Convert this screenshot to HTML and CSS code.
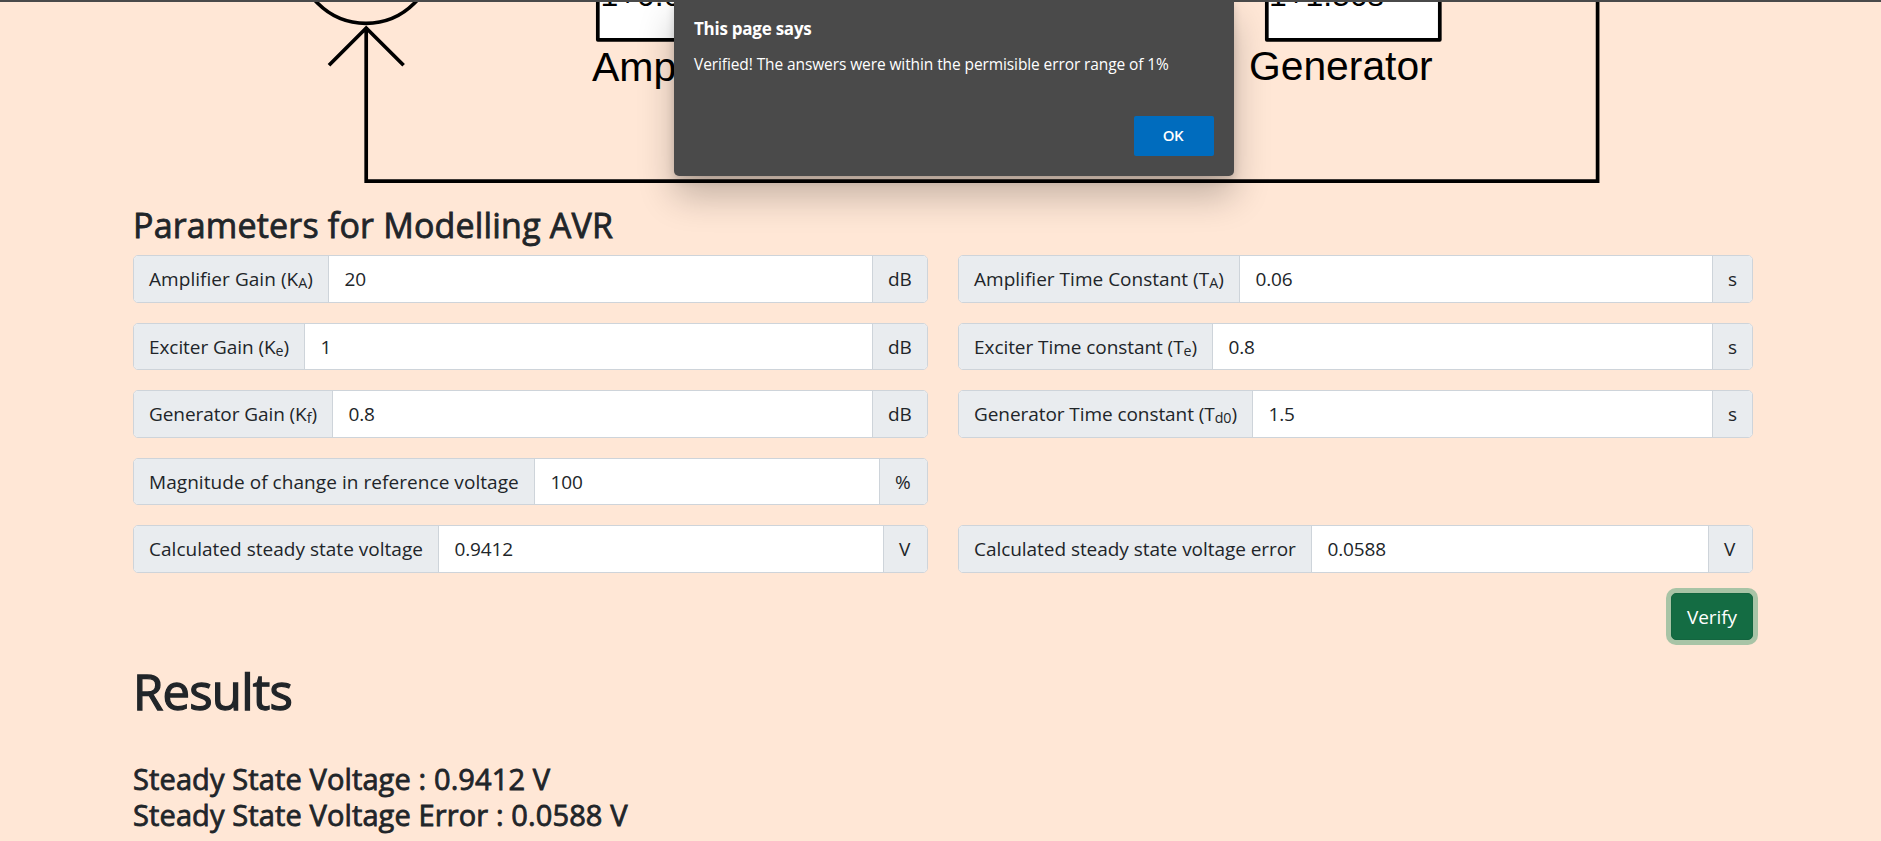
FILE: index.html
```html
<!DOCTYPE html>
<html lang="en">
<head>
<meta charset="utf-8">
<title>AVR Modelling</title>
<link rel="stylesheet" href="styles.css">
</head>
<body>
<svg class="diagram" width="1881" height="203" viewBox="0 0 1881 203">
  <g fill="none" stroke="#000" stroke-width="3.7">
    <circle cx="366" cy="-45" r="68.3"/>
    <path d="M366.2 27V181.2H1597.6V0M329 65.2L366.2 28L403.6 65.2"/>
    <rect x="597.8" y="-60" width="175" height="99.8" fill="#fff" stroke-linejoin="round"/>
    <rect x="1266.8" y="-60" width="173" height="99.8" fill="#fff" stroke-linejoin="round"/>
  </g>
  <g class="diagram-text">
    <text x="600.5" y="5.8" font-size="32">1+0.06s</text>
    <text x="1269" y="5.8" font-size="32">1+1.50s</text>
    <text x="592" y="80.5" font-size="41">Amp</text>
    <text x="1249" y="79.7" font-size="40.8">Generator</text>
  </g>
</svg>

<main class="container">
  <h3 class="params-title">Parameters for Modelling AVR</h3>
  <form class="params">
    <div class="group"><label class="addon w-ka">Amplifier Gain (K<sub>A</sub>)</label><span class="value">20</span><span class="addon unit-db">dB</span></div>
    <div class="group"><label class="addon w-ta">Amplifier Time Constant (T<sub>A</sub>)</label><span class="value">0.06</span><span class="addon unit-s">s</span></div>
    <div class="group"><label class="addon w-ke">Exciter Gain (K<sub>e</sub>)</label><span class="value">1</span><span class="addon unit-db">dB</span></div>
    <div class="group"><label class="addon w-te">Exciter Time constant (T<sub>e</sub>)</label><span class="value">0.8</span><span class="addon unit-s">s</span></div>
    <div class="group"><label class="addon w-kf">Generator Gain (K<sub>f</sub>)</label><span class="value">0.8</span><span class="addon unit-db">dB</span></div>
    <div class="group"><label class="addon w-td">Generator Time constant (T<sub>d0</sub>)</label><span class="value">1.5</span><span class="addon unit-s">s</span></div>
    <div class="group"><label class="addon w-mag">Magnitude of change in reference voltage</label><span class="value">100</span><span class="addon unit-pc">%</span></div>
    <div class="group group-first"><label class="addon w-vss">Calculated steady state voltage</label><span class="value">0.9412</span><span class="addon unit-v">V</span></div>
    <div class="group"><label class="addon w-err">Calculated steady state voltage error</label><span class="value">0.0588</span><span class="addon unit-v">V</span></div>
  </form>
  <div class="actions"><button class="verify" type="button">Verify</button></div>
  <h1 class="results-title">Results</h1>
  <h4 class="result">Steady State Voltage : 0.9412 V</h4>
  <h4 class="result">Steady State Voltage Error : 0.0588 V</h4>
</main>

<div class="top-edge"></div>
<div class="dialog" role="alertdialog">
  <div class="dialog-title">This page says</div>
  <div class="dialog-message">Verified! The answers were within the permisible error range of 1%</div>
  <button class="dialog-ok" type="button">OK</button>
</div>
</body>
</html>
```
FILE: styles.css
```css
* { box-sizing: border-box; }

body {
  margin: 0;
  height: 841px;
  overflow: hidden;
  background: #ffe7d6;
  color: #212529;
  font-family: "Open Sans", "Noto Sans", sans-serif;
  font-size: 19px;
}

h1, h3, h4 {
  margin: 0;
  font-weight: 400;
  white-space: nowrap;
  -webkit-text-stroke: 0.8px #212529;
}

.diagram { display: block; }
.diagram-text { font-family: "Liberation Sans", Arial, sans-serif; fill: #000; }

.container { width: 1620px; margin-left: 133px; }

.params-title {
  padding-top: 1px;
  margin-bottom: 9px;
  font-size: 34px;
  line-height: 42px;
  letter-spacing: 0.18px;
}

.params {
  display: grid;
  grid-template-columns: 795px 795px;
  grid-auto-rows: 47.5px;
  gap: 20px 30px;
}

.group {
  display: flex;
  overflow: hidden;
  background: #fff;
  border: 1px solid #ced4da;
  border-radius: 5px;
}
.group-first { grid-column: 1; }

.addon {
  flex: none;
  padding-left: 15px;
  background: #e9ecef;
  line-height: 47.5px;
  white-space: nowrap;
}
label.addon { border-right: 1px solid #ced4da; }
span.addon { border-left: 1px solid #ced4da; }

.value { flex: 1; padding-left: 15.5px; line-height: 47.5px; letter-spacing: -0.13px; }

sub {
  position: relative;
  bottom: -0.17em;
  font-size: 0.75em;
  line-height: 0;
  vertical-align: baseline;
}

/* Label widths, counted from inside the group's border */
.w-ka { width: 195px; letter-spacing: 0.05px; }
.w-ta { width: 281px; letter-spacing: 0.02px; }
.w-ke { width: 171px; letter-spacing: -0.07px; }
.w-te { width: 254px; letter-spacing: -0.06px; }
.w-kf { width: 199px; letter-spacing: -0.08px; }
.w-td { width: 294px; letter-spacing: -0.07px; }
.w-mag { width: 401px; letter-spacing: 0.06px; }
.w-vss { width: 305px; letter-spacing: 0.02px; }
.w-err { width: 353px; letter-spacing: -0.05px; }

.unit-db { width: 55px; }
.unit-pc { width: 48px; }
.unit-v { width: 44px; }
.unit-s { width: 40px; }

.actions { display: flex; justify-content: flex-end; margin: 20px 0; }

.verify {
  width: 82px;
  height: 47.5px;
  padding: 1px 0 0;
  border: 1px solid #13653f;
  border-radius: 5px;
  background: #146c43;
  color: #fff;
  font: inherit;
  letter-spacing: -0.08px;
  box-shadow: 0 0 0 5px rgba(82, 162, 118, 0.5);
}

.results-title {
  padding-top: 1px;
  margin-bottom: 40px;
  font-size: 49px;
  line-height: 60px;
  letter-spacing: -0.75px;
  -webkit-text-stroke-width: 1.3px;
}

.result { font-size: 29px; line-height: 36px; letter-spacing: 0.12px; }

.top-edge {
  position: absolute;
  top: 0;
  left: 0;
  width: 100%;
  height: 2px;
  background: #4a4a4a;
}

.dialog {
  position: absolute;
  top: 0;
  left: 674px;
  display: flex;
  flex-direction: column;
  width: 560px;
  height: 176px;
  padding: 16px 20px 20px;
  border-radius: 0 0 5px 5px;
  background: #4a4a4a;
  color: #fff;
  box-shadow: 0 4px 9px rgba(0, 0, 0, 0.14), 0 20px 36px rgba(0, 0, 0, 0.24);
}

.dialog-title { font-size: 17px; font-weight: 700; line-height: 25px; letter-spacing: -0.25px; }
.dialog-message { margin-top: 12px; font-size: 15.5px; line-height: 23px; letter-spacing: -0.1px; white-space: nowrap; }

.dialog-ok {
  align-self: flex-end;
  width: 80px;
  height: 40px;
  margin-top: auto;
  padding: 0 2px 2px 0;
  border: 0;
  border-radius: 2px;
  background: #006cbe;
  color: #fff;
  font: 600 15px "Open Sans", sans-serif;
  letter-spacing: -0.4px;
}
```
